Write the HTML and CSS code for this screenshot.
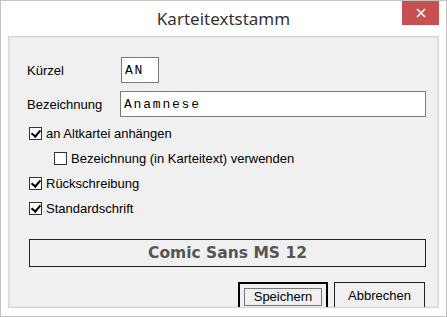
FILE: index.html
```html
<!DOCTYPE html>
<html lang="de">
<head>
  <meta charset="UTF-8" />
  <title>Karteitextstamm</title>
  <link rel="stylesheet" href="styles.css">
</head>
<body>
  <div class="window">
    <div class="titlebar">
      <span></span>
      <span class="title">Karteitextstamm</span>
      <button class="close" title="Schließen">
        <svg width="10" height="10" viewBox="0 0 10 10"><path d="M1 1 L9 9 M9 1 L1 9" stroke="#fff" stroke-width="1.6"/></svg>
      </button>
    </div>

    <div class="panel">
      <div class="field">
        <label>Kürzel</label>
        <input class="short" type="text" value="AN">
      </div>
      <div class="field">
        <label>Bezeichnung</label>
        <input class="long" type="text" value="Anamnese">
      </div>

      <div class="checks">
        <div class="check"><span class="box on"></span>an Altkartei anhängen</div>
        <div class="check indent"><span class="box"></span>Bezeichnung (in Karteitext) verwenden</div>
        <div class="check"><span class="box on"></span>Rückschreibung</div>
        <div class="check"><span class="box on"></span>Standardschrift</div>
      </div>

      <div class="fontbox">Comic Sans MS 12</div>

      <div class="buttons">
        <button class="btn default"><span class="focus">Speichern</span></button>
        <button class="btn">Abbrechen</button>
      </div>
    </div>
  </div>
</body>
</html>
```

FILE: styles.css
```css
body {
  margin: 0;
  font-family: 'Liberation Sans', Arial, sans-serif;
  font-size: 13px;
  color: #000;
  background: #fff;
}
.window {
  width: 447px;
  height: 317px;
  box-sizing: border-box;
  border: 1px solid #c4c4c4;
  background: #fff;
  display: flex;
  flex-direction: column;
}
.titlebar {
  height: 35px;
  display: grid;
  grid-template-columns: 1fr auto 1fr;
  align-items: start;
}
.title {
  font-family: 'Noto Sans', sans-serif;
  font-size: 17px;
  color: #333;
  margin-top: 6px;
}
.close {
  justify-self: end;
  width: 37px;
  height: 24px;
  margin-right: 7px;
  border: none;
  padding: 0;
  background: #c75050;
  display: flex;
  align-items: center;
  justify-content: center;
}
.panel {
  margin: 0 7px;
  height: 272px;
  box-sizing: border-box;
  border: 1px solid #d6d6d6;
  box-shadow: inset 0 0 0 1px #e6e6e6;
  background: #f0f0f0;
  padding: 20px 12px 0 18px;
  overflow: hidden;
}
.field {
  display: flex;
  align-items: center;
  margin-bottom: 8px;
}
.field label {
  width: 94px;
}
.field input {
  height: 26px;
  box-sizing: border-box;
  border: 1px solid #7a7a7a;
  background: #fff;
  font-family: 'Liberation Mono', 'Courier New', monospace;
  font-size: 13px;
  letter-spacing: 1.8px;
  padding: 0 3px;
  outline: none;
  margin: 0;
}
.field input.short {
  width: 38px;
}
.field input.long {
  flex: 1;
  margin-left: -1px;
}
.checks {
  margin-top: -4px;
  padding-left: 2px;
}
.check {
  height: 25px;
  display: flex;
  align-items: center;
}
.check.indent {
  padding-left: 25px;
}
.box {
  width: 13px;
  height: 13px;
  box-sizing: border-box;
  border: 1px solid #333;
  background: #fff;
  margin-right: 4px;
  position: relative;
}
.box.on::after {
  content: "";
  position: absolute;
  left: 3px;
  top: 0px;
  width: 4px;
  height: 7px;
  border: solid #000;
  border-width: 0 2px 2px 0;
  transform: rotate(40deg);
}
.fontbox {
  margin: 18px 0 0 2px;
  height: 28px;
  box-sizing: border-box;
  border: 1px solid #222;
  display: flex;
  align-items: center;
  justify-content: center;
  font-family: 'Comic Sans MS', 'DejaVu Sans', sans-serif;
  font-weight: bold;
  font-size: 15.5px;
  color: #555;
}
.buttons {
  margin-top: 15px;
  display: flex;
  justify-content: flex-end;
  gap: 6px;
  padding-right: 1px;
}
.btn {
  width: 91px;
  height: 30px;
  box-sizing: border-box;
  border: 1px solid #222;
  background: #f0f0f0;
  font-family: 'Liberation Sans', Arial, sans-serif;
  font-size: 13px;
  color: #000;
  padding: 0 0 4px;
}
.btn.default {
  width: 90px;
  border: 2px solid #000;
  padding: 4px 4px 8px;
}
.focus {
  display: block;
  border: 1px solid #777;
  padding: 0 0 1px;
}
```
